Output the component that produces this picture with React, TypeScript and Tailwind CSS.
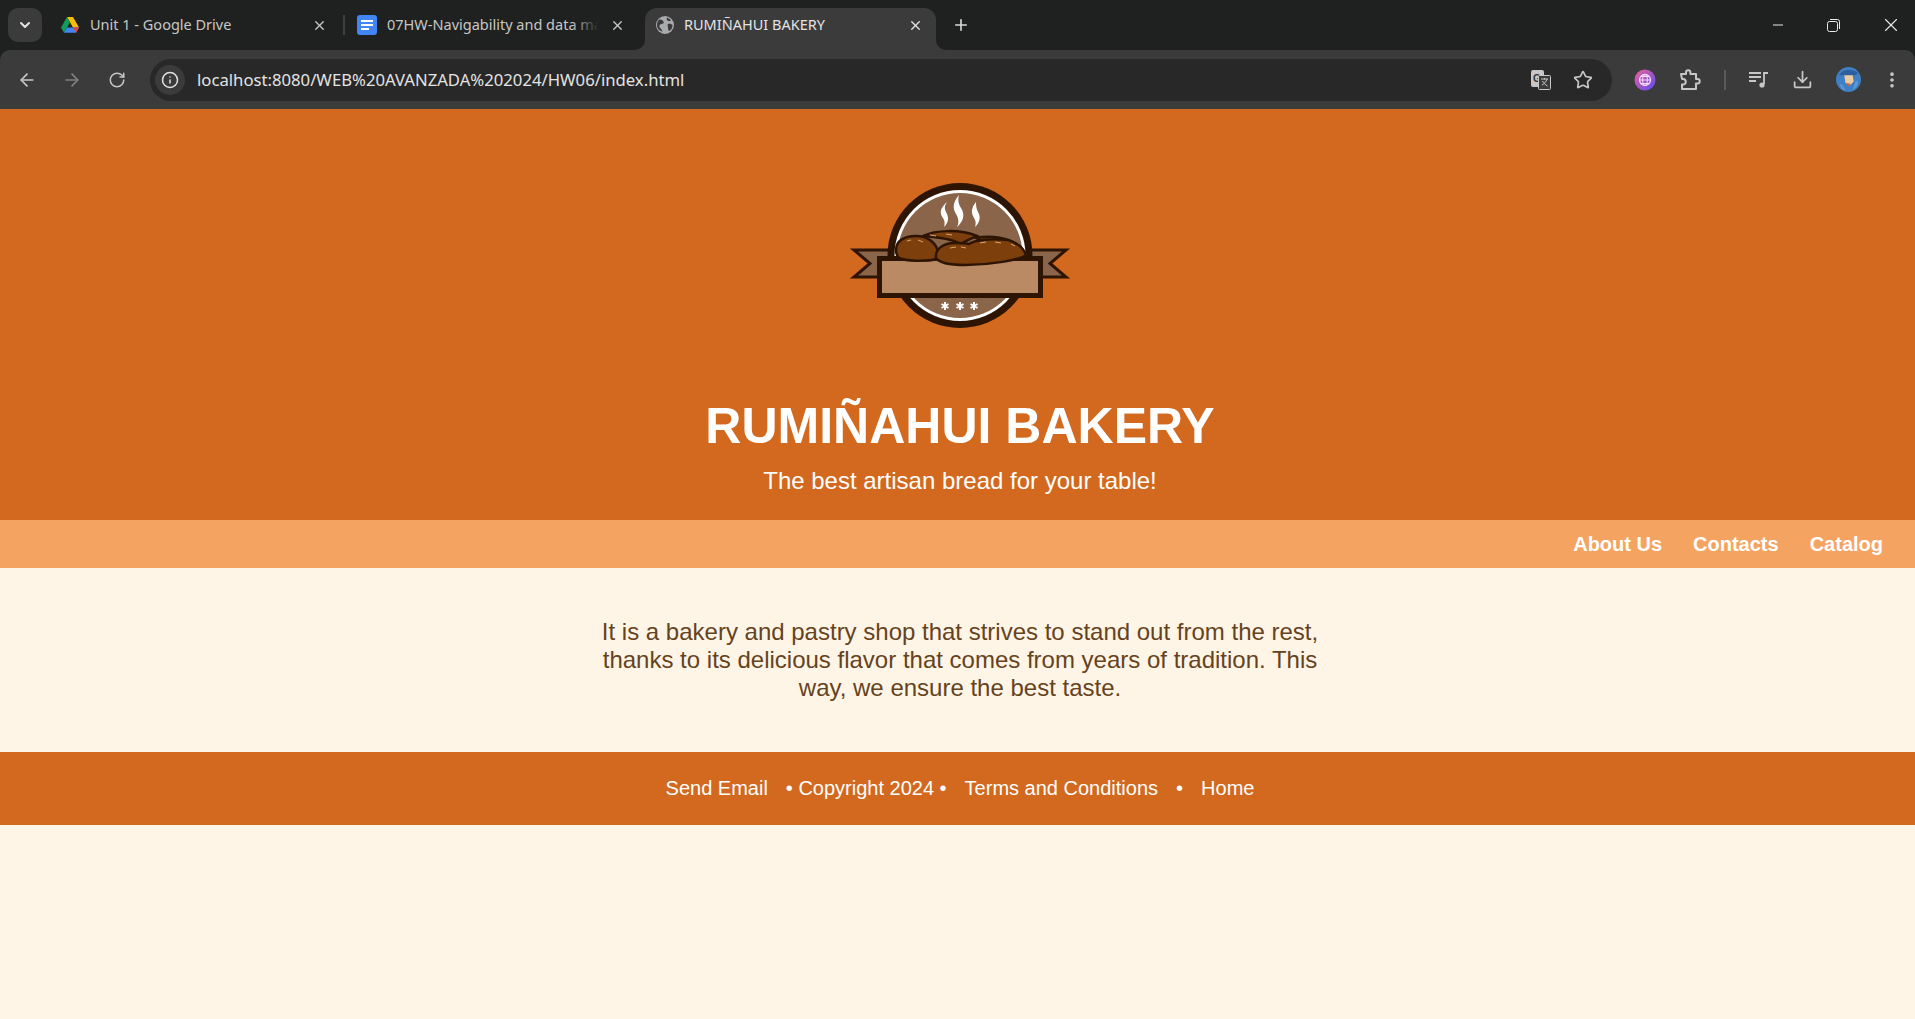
import React from 'react';
import { ArrowLeft, ArrowRight, ChevronDown, Download, EllipsisVertical, Info, Minus, Plus, RotateCw, Star, X } from 'lucide-react';

const DriveIcon = () => (
    <svg width="18" height="16" viewBox="0 0 18 16">
        <path d="M6 0h6l6 10.5h-6z" fill="#fbbc04" />
        <path d="M6 0l3 5.2L3 15.7 0 10.5z" fill="#0f9d58" />
        <path d="M3 15.7l3-5.2h12l-3 5.2z" fill="#4285f4" />
        <path d="M15 15.7l-3-5.2h6z" fill="#ea4335" />
    </svg>
);

const DocsIcon = () => (
    <svg width="20" height="20" viewBox="0 0 20 20">
        <rect width="20" height="20" rx="3" fill="#4285f4" />
        <rect x="4" y="5" width="12" height="2" fill="#fff" />
        <rect x="4" y="9" width="12" height="2" fill="#fff" />
        <rect x="4" y="13" width="8" height="2" fill="#fff" />
    </svg>
);

const GlobeIcon = () => (
    <svg width="18" height="18" viewBox="0 0 18 18">
        <circle cx="9" cy="9" r="9" fill="#a8abae" />
        <path d="M3 3.5c2 0 3.5.5 4.5 2S7 8 5.5 8 3 9.500 3.500 11 6 13 6.500 15.500c-3-.5-5.500-3-5.500-6.500 0-2 .8-4 2-5.500zM11 1.500c1.500.5 3 1.500 4 3-1 .5-2.500 1-3.500 0S10.500 2.500 11 1.500zM12 8c1.500-.5 3.500 0 4.500 1 0 2.500-1 4.500-3 6-1 0-1.500-1.500-1.500-3s-1-3.500 0-4z" fill="#3b3b3b" />
    </svg>
);

const TranslateIcon = () => (
    <svg width="22" height="22" viewBox="0 0 22 22">
        <rect x="1" y="1" width="13" height="17" rx="2" fill="#c7c7c7" />
        <text x="3" y="13" fontSize="10" fontWeight="700" fill="#333" fontFamily="Liberation Sans, sans-serif">G</text>
        <rect x="8.5" y="6.5" width="12" height="14" rx="1" fill="#3b3b3b" stroke="#c7c7c7" />
        <path d="M11 10h7M14.5 9v1.500M17 10c-1 3-3 5-5 6M12.500 12c1 2 3 4 5 5" stroke="#c7c7c7" fill="none" />
    </svg>
);

const ExtensionIcon = () => (
    <svg width="22" height="22" viewBox="0 0 22 22">
        <defs>
            <linearGradient id="extGrad" x1="0" y1="0" x2="1" y2="1">
                <stop offset="0" stopColor="#f0609a" />
                <stop offset="1" stopColor="#5a4df0" />
            </linearGradient>
        </defs>
        <circle cx="11" cy="11" r="10.5" fill="url(#extGrad)" />
        <circle cx="11" cy="11" r="5.500" fill="none" stroke="#f3dcf5" strokeWidth="1.3" />
        <ellipse cx="11" cy="11" rx="2.400" ry="5.500" fill="none" stroke="#f3dcf5" strokeWidth="1" />
        <path d="M5.500 11h11M7 7.500h8M7 14.500h8" stroke="#f3dcf5" strokeWidth="1" />
    </svg>
);

const PuzzleIcon = () => (
    <svg width="22" height="22" viewBox="0 0 22 22" fill="none" stroke="#c7c7c7" strokeWidth="2" strokeLinejoin="round">
        <path d="M2 5h5V3.500a2.200 2.200 0 0 1 4.400 0V5H17v5h1.500a2.200 2.200 0 0 1 0 4.400H17V20H3v-4.500h1a2.800 2.800 0 0 0 0-5.600H3z" />
    </svg>
);

const MediaIcon = () => (
    <svg width="20" height="18" viewBox="0 0 20 18" fill="none" stroke="#c7c7c7" strokeWidth="1.8">
        <path d="M0 2h12M0 6h12M0 10h7" />
        <path d="M15 13V2h4" />
        <circle cx="13" cy="14" r="2.600" fill="#c7c7c7" stroke="none" />
    </svg>
);

const Avatar = () => (
    <svg width="25" height="25" viewBox="0 0 24 24">
        <circle cx="12" cy="12" r="12" fill="#3f7fc4" />
        <path d="M3 8c2-6 14-7 18-2l-3 2H7z" fill="#2b5f9e" />
        <path d="M8 8h8l1 6-4 4-4-3z" fill="#eccb9e" />
        <path d="M4 16c3 1 4 4 5 7-3-1-5-3-5-7zM19 13l2 1c0 4-2 7-5 8z" fill="#5a9ad8" />
        <path d="M9 15l5 1-1 3z" fill="#c96a3c" />
    </svg>
);

const LogoStar = ({ x }: { x: number }) => (
    <path d={`M${x} 132v8M${x - 3.5} 134l7 4M${x - 3.5} 138l7-4`} stroke="#fff" strokeWidth="2" />
);

// bakery badge, drawn in the 260x170 box around it
const BakeryLogo = () => (
    <svg width="260" height="170" viewBox="0 0 260 170" className="block">
        <path d="M24 80h36v27H24l16-13.500z" fill="#8a654a" stroke="#2e1503" strokeWidth="3" strokeLinejoin="miter" />
        <path d="M236 80h-36v27h36l-16-13.500z" fill="#8a654a" stroke="#2e1503" strokeWidth="3" strokeLinejoin="miter" />
        <circle cx="130" cy="85.5" r="72.5" fill="#2e1503" />
        <circle cx="130" cy="85.5" r="65.5" fill="#fff" />
        <circle cx="130" cy="85.5" r="62.500" fill="#8a654a" />
        <path d="M117 32C109 39 110 44 113 48C115 51 115 54 114 57C119 52 119 47 116 42C114 38 115 35 117 32z" fill="#fff" />
        <path d="M129 25C122 33 123 39 126 44C129 49 129 53 127 57C134 51 135 44 131 38C128 33 128 29 129 25z" fill="#fff" />
        <path d="M146 32C141 38 141 43 144 48C146 51 146 54 145 57C150 52 151 47 148 42C146 38 146 35 146 32z" fill="#fff" />
        <path d="M60 92H200V128H60z" fill="#2e1503" />
        <rect x="49.500" y="88.500" width="161" height="37" fill="#b98a64" stroke="#2e1503" strokeWidth="5" />
        <path d="M93 66C105 60 130 59 147 66C140 69 135 71 131 74C122 69 108 67 93 66z" fill="#7d3f0c" stroke="#2e1503" strokeWidth="2.500" />
        <path d="M146 68C160 65 180 67 191 78L170 80z" fill="#7d3f0c" stroke="#2e1503" strokeWidth="2.500" />
        <path d="M66 80C66 71 74 66 86 66C97 66 106 72 108 82L108 89C94 92 76 91 69 88C67 86 66 83 66 80z" fill="#7d3f0c" stroke="#2e1503" strokeWidth="2.500" />
        <path d="M106 88C105 79 113 73 125 73C130 73 135 73 139 74C145 70 160 68 178 70C188 73 194 79 196 85C190 90 160 95 135 95C122 95 110 94 106 88z" fill="#7d3f0c" stroke="#2e1503" strokeWidth="2.500" />
        <path d="M77 71l4-1M88 70l5 2M100 65l6 1M116 64l6 1M120 78l6-1M131 77l5 1M150 73l6-1M165 72l6 1M181 74l4 2" stroke="#d9a66e" strokeWidth="1" />
        <LogoStar x={115} />
        <LogoStar x={130} />
        <LogoStar x={144} />
    </svg>
);

const App: React.FC = () => {
    return (
        <div className="min-h-[1019px] bg-[#fff5e6] flex flex-col font-['Liberation_Sans',Arial,sans-serif]">
            <div className="bg-[#1f2120]">
                <div className="h-[50px] flex items-start font-['Noto_Sans',sans-serif] text-[14.5px] text-[#c7c7c7]">
                    <div className="ml-2 mt-2 w-[34px] h-[34px] rounded-[10px] bg-[#3b3b3b] flex items-center justify-center">
                        <ChevronDown size={16} strokeWidth={3} className="text-[#e3e3e3]" />
                    </div>
                    <div className="ml-[19px] w-[273px] h-[50px] flex items-center shrink-0">
                        <DriveIcon />
                        <span className="ml-[11px]">Unit 1 - Google Drive</span>
                        <X size={15} strokeWidth={2.2} className="ml-auto mr-[7px]" />
                    </div>
                    <div className="mt-[15px] ml-[9px] w-[2px] h-[20px] bg-[#3f3f3f]" />
                    <div className="ml-3 w-[272px] h-[50px] flex items-center shrink-0">
                        <DocsIcon />
                        <span className="relative ml-[10px] w-[212px] overflow-hidden whitespace-nowrap">
                            07HW-Navigability and data ma
                            <span className="absolute right-0 top-0 bottom-0 w-[28px] bg-gradient-to-r from-transparent to-[#1f2120]" />
                        </span>
                        <X size={15} strokeWidth={2.2} className="ml-auto mr-[4px]" />
                    </div>
                    <div className="relative mt-2 ml-[16px] w-[291px] h-[42px] bg-[#3b3b3b] rounded-t-[12px] flex items-center pl-[11px] pr-[13px] pb-[8px] shrink-0 text-[#e3e3e3]">
                        <svg width="10" height="10" viewBox="0 0 10 10" className="absolute -left-[10px] bottom-0">
                            <path d="M10 0v10H0a10 10 0 0 0 10-10z" fill="#3b3b3b" />
                        </svg>
                        <svg width="10" height="10" viewBox="0 0 10 10" className="absolute -right-[10px] bottom-0">
                            <path d="M0 0v10h10A10 10 0 0 1 0 0z" fill="#3b3b3b" />
                        </svg>
                        <GlobeIcon />
                        <span className="ml-[10px]">RUMIÑAHUI BAKERY</span>
                        <X size={15} strokeWidth={2.2} className="ml-auto" />
                    </div>
                    <Plus size={18} strokeWidth={2.2} className="ml-[16px] mt-4 text-[#d8d8d8]" />
                    <div className="ml-auto flex items-center h-[50px] text-[#e8e8e8]">
                        <Minus size={16} strokeWidth={1.5} />
                        <svg width="13" height="13" viewBox="0 0 13 13" fill="none" stroke="currentColor" className="ml-[41px]">
                            <rect x="0.5" y="2.5" width="10" height="10" rx="2" />
                            <path d="M3 .5h7.500a2 2 0 0 1 2 2V10" />
                        </svg>
                        <X size={22} strokeWidth={1.2} className="ml-[40px] mr-[13px]" />
                    </div>
                </div>
                <div className="h-[59px] bg-[#3b3b3b] rounded-t-[10px] flex items-center text-[#c7c7c7]">
                    <ArrowLeft size={20} className="ml-[17px]" />
                    <ArrowRight size={20} className="ml-[25px] text-[#808080]" />
                    <RotateCw size={18} className="ml-[26px]" />
                    <div className="ml-[24px] w-[1462px] h-[42px] bg-[#282828] rounded-full flex items-center pl-[5px] pr-[19px]">
                        <div className="w-[30px] h-[30px] rounded-full bg-[#3b3b3b] flex items-center justify-center">
                            <Info size={18} className="text-[#e3e3e3]" />
                        </div>
                        <span className="ml-3 font-['Noto_Sans',sans-serif] text-[16.7px] text-[#e3e3e3]">localhost:8080/WEB%20AVANZADA%202024/HW06/index.html</span>
                        <div className="ml-auto flex items-center gap-[21px]">
                            <TranslateIcon />
                            <Star size={20} strokeWidth={2} />
                        </div>
                    </div>
                    <div className="ml-[22px]"><ExtensionIcon /></div>
                    <div className="ml-[23px]"><PuzzleIcon /></div>
                    <div className="ml-[23px] w-[2px] h-[20px] bg-[#5a5a5a]" />
                    <div className="ml-[23px]"><MediaIcon /></div>
                    <Download size={21} strokeWidth={2} className="ml-[23px]" />
                    <div className="ml-[23px]"><Avatar /></div>
                    <EllipsisVertical size={20} strokeWidth={2.4} className="ml-[21px]" />
                </div>
            </div>
            <header className="h-[411px] bg-[#d2691e] flex flex-col items-center pl-[5px] text-white">
                <div className="mt-[61px]"><BakeryLogo /></div>
                <h1 className="mt-[59px] text-[50px] leading-[55px] font-bold">RUMIÑAHUI BAKERY</h1>
                <p className="mt-[13px] text-[24px] leading-[28px]">The best artisan bread for your table!</p>
            </header>
            <nav className="h-[48px] bg-[#f4a460] flex items-center justify-end gap-[31px] pr-[32px] text-[20px] font-bold text-white">
                <a>About Us</a>
                <a>Contacts</a>
                <a>Catalog</a>
            </nav>
            <main className="h-[184px] flex justify-center pl-[5px] pt-[50px]">
                <p className="w-[720px] text-center text-[24px] leading-[28px] text-[#654321]">
                    It is a bakery and pastry shop that strives to stand out from the rest, thanks to its delicious flavor that comes from years of tradition. This way, we ensure the best taste.
                </p>
            </main>
            <footer className="h-[73px] bg-[#d2691e] flex items-center justify-center pl-[5px] pb-[2px] text-[20px] text-white">
                <a>Send Email</a>
                <span className="ml-[18px]">• Copyright 2024 •</span>
                <a className="ml-[18px]">Terms and Conditions</a>
                <span className="ml-[18px]">•</span>
                <a className="ml-[18px]">Home</a>
            </footer>
        </div>
    );
};

export default App;
